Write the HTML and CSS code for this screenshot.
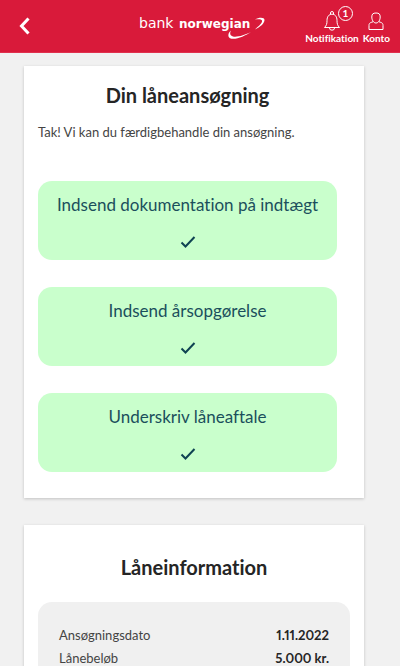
FILE: index.html
```html
<!DOCTYPE html>
<html lang="da">
<head>
    <meta charset="UTF-8">
    <meta name="viewport" content="width=device-width, initial-scale=1.0">
    <title>Din låneansøgning</title>
    <link rel="stylesheet" href="styles.css">
</head>
<body>
    <header class="topbar">
        <button class="back" type="button" aria-label="Tilbage">
            <svg width="12" height="18" viewBox="0 0 12 18"><path d="M9.500 1.500 L2.500 9 L9.500 16.500" fill="none" stroke="#fff" stroke-width="3"/></svg>
        </button>

        <a class="logo" href="#" aria-label="bank norwegian">
            <svg width="130" height="26" viewBox="0 0 130 26" fill="#fff">
                <text class="logo-text" x="3" y="13">bank</text>
                <text class="logo-text logo-bold" x="43" y="13">norwegian</text>
                <path d="M119 4.500 C123 2 128.500 2 128.500 5 C128.500 8.500 124 12 119 14.500 C123 11 126.500 8 126 5.600 C125.500 4 122 4 119 4.500 Z"/>
                <path d="M95 15.500 C92 18 91.500 21.500 94 23.200 C99 25.500 109 21 115 17 C109 20 101 22.500 97 21.500 C94 20.700 93.500 18 95 15.500 Z"/>
            </svg>
        </a>

        <nav class="links">
            <a class="link" href="#">
                <span class="link-icon">
                    <svg width="18" height="20" viewBox="0 0 18 20" fill="none" stroke="#fff">
                        <path d="M7.500 3 V2 A1.500 1.500 0 0 1 10.500 2 V3"/>
                        <path d="M1.500 16.500 C3.500 14.500 4 13 4 9.500 C4 5.500 6 3.200 9 3.200 C12 3.200 14 5.500 14 9.500 C14 13 14.500 14.500 16.500 16.500 Z"/>
                        <path d="M6.500 17 A2.500 2.200 0 0 0 11.500 17"/>
                    </svg>
                    <span class="badge">1</span>
                </span>
                Notifikation
            </a>
            <a class="link" href="#">
                <span class="link-icon">
                    <svg width="18" height="20" viewBox="0 0 18 20" fill="none" stroke="#fff">
                        <path d="M9 2 C6 2 4.800 3 4.800 6 C4.800 9 6.500 12 9 12 C11.500 12 13.200 9 13.200 6 C13.200 3 12 2 9 2 Z"/>
                        <path d="M6 10.800 C2.500 11.800 2 12.500 2 14.500 V18.500 H16 V14.500 C16 12.500 15.500 11.800 12 10.800"/>
                    </svg>
                </span>
                Konto
            </a>
        </nav>
    </header>

    <main class="content">
        <section class="card card-steps">
            <h1 class="title">Din låneansøgning</h1>
            <p class="intro">Tak! Vi kan du færdigbehandle din ansøgning.</p>

            <div class="steps">
                <button class="step" type="button">
                    Indsend dokumentation på indtægt
                    <svg class="check" width="16" height="14" viewBox="0 0 16 14"><path d="M1.500 7.500 L5.500 11.500 L14.500 2"/></svg>
                </button>
                <button class="step" type="button">
                    Indsend årsopgørelse
                    <svg class="check" width="16" height="14" viewBox="0 0 16 14"><path d="M1.500 7.500 L5.500 11.500 L14.500 2"/></svg>
                </button>
                <button class="step" type="button">
                    Underskriv låneaftale
                    <svg class="check" width="16" height="14" viewBox="0 0 16 14"><path d="M1.500 7.500 L5.500 11.500 L14.500 2"/></svg>
                </button>
            </div>
        </section>

        <section class="card card-info">
            <h2 class="title">Låneinformation</h2>
            <div class="info">
                <table class="info-table">
                    <tr>
                        <th scope="row">Ansøgningsdato</th>
                        <td>1.11.2022</td>
                    </tr>
                    <tr>
                        <th scope="row">Lånebeløb</th>
                        <td>5.000 kr.</td>
                    </tr>
                </table>
            </div>
        </section>
    </main>
</body>
</html>
```
FILE: styles.css
```css
* {
    box-sizing: border-box;
}

html {
    scrollbar-width: none;
}

body {
    margin: 0;
    background: #f1f1f1;
    color: #252525;
    font-family: Lato, "Open Sans", sans-serif;
    font-size: 14px;
    font-variant-ligatures: none;
}

.topbar {
    display: grid;
    grid-template-columns: 1fr auto 1fr;
    align-items: center;
    height: 53px;
    padding: 0 10px 0 11px;
    background: #d91a3a;
    border-bottom: 1px solid #e0304e;
}

.back {
    justify-self: start;
    display: flex;
    padding: 8px;
    border: 0;
    background: none;
    cursor: pointer;
}

.logo {
    display: flex;
    padding-top: 4px;
}

.logo-text {
    font-family: "DejaVu Sans", sans-serif;
    font-size: 14px;
}

.logo-bold {
    font-size: 12px;
    font-weight: bold;
}

.links {
    justify-self: end;
    display: flex;
    gap: 4px;
}

.link {
    display: flex;
    flex-direction: column;
    align-items: center;
    gap: 1px;
    color: #fff;
    font-size: 10px;
    font-weight: bold;
    line-height: 12px;
    text-decoration: none;
}

.link-icon {
    display: flex;
    position: relative;
    padding-top: 2px;
}

.badge {
    position: absolute;
    left: 15px;
    top: -3px;
    width: 15px;
    height: 15px;
    border: 1px solid #fff;
    border-radius: 50%;
    background: #d91a3a;
    line-height: 13px;
    text-align: center;
}

.content {
    display: flex;
    flex-direction: column;
    gap: 27px;
    padding: 13px 36px 13px 24px;
}

.card {
    padding: 14px 14px 27px;
    background: #fff;
    box-shadow: 0 1px 3px rgba(0, 0, 0, 0.2);
}

.card-steps {
    padding-bottom: 26px;
}

.card-info {
    padding-top: 27px;
}

.title {
    margin: 0;
    font-size: 20px;
    font-weight: bold;
    line-height: 30px;
    text-align: center;
}

.card-steps .title {
    padding-right: 13px;
}

.intro {
    margin: 12px 0 39px;
    color: #444;
    font-size: 13px;
    line-height: 20px;
}

.steps {
    display: flex;
    flex-direction: column;
    gap: 27px;
    padding-right: 13px;
}

.step {
    display: flex;
    flex-direction: column;
    align-items: center;
    gap: 18px;
    padding: 12px 8px 11px;
    border: 0;
    border-radius: 14px;
    background: #c9ffcc;
    color: #1b4f5c;
    font: inherit;
    font-size: 17px;
    font-variant-ligatures: none;
    line-height: 24px;
    cursor: pointer;
}

.check {
    fill: none;
    stroke: #0f4352;
    stroke-width: 2;
}

.info {
    margin-top: 20px;
    padding: 22px 21px;
    border-radius: 14px;
    background: #f0f0f0;
}

.info-table {
    width: 100%;
    border-collapse: collapse;
    font-size: 13px;
    line-height: 23px;
}

.info-table th {
    padding: 0;
    color: #444;
    font-weight: normal;
    text-align: left;
}

.info-table td {
    padding: 0;
    font-variant-numeric: proportional-nums;
    font-weight: bold;
    text-align: right;
}
```
